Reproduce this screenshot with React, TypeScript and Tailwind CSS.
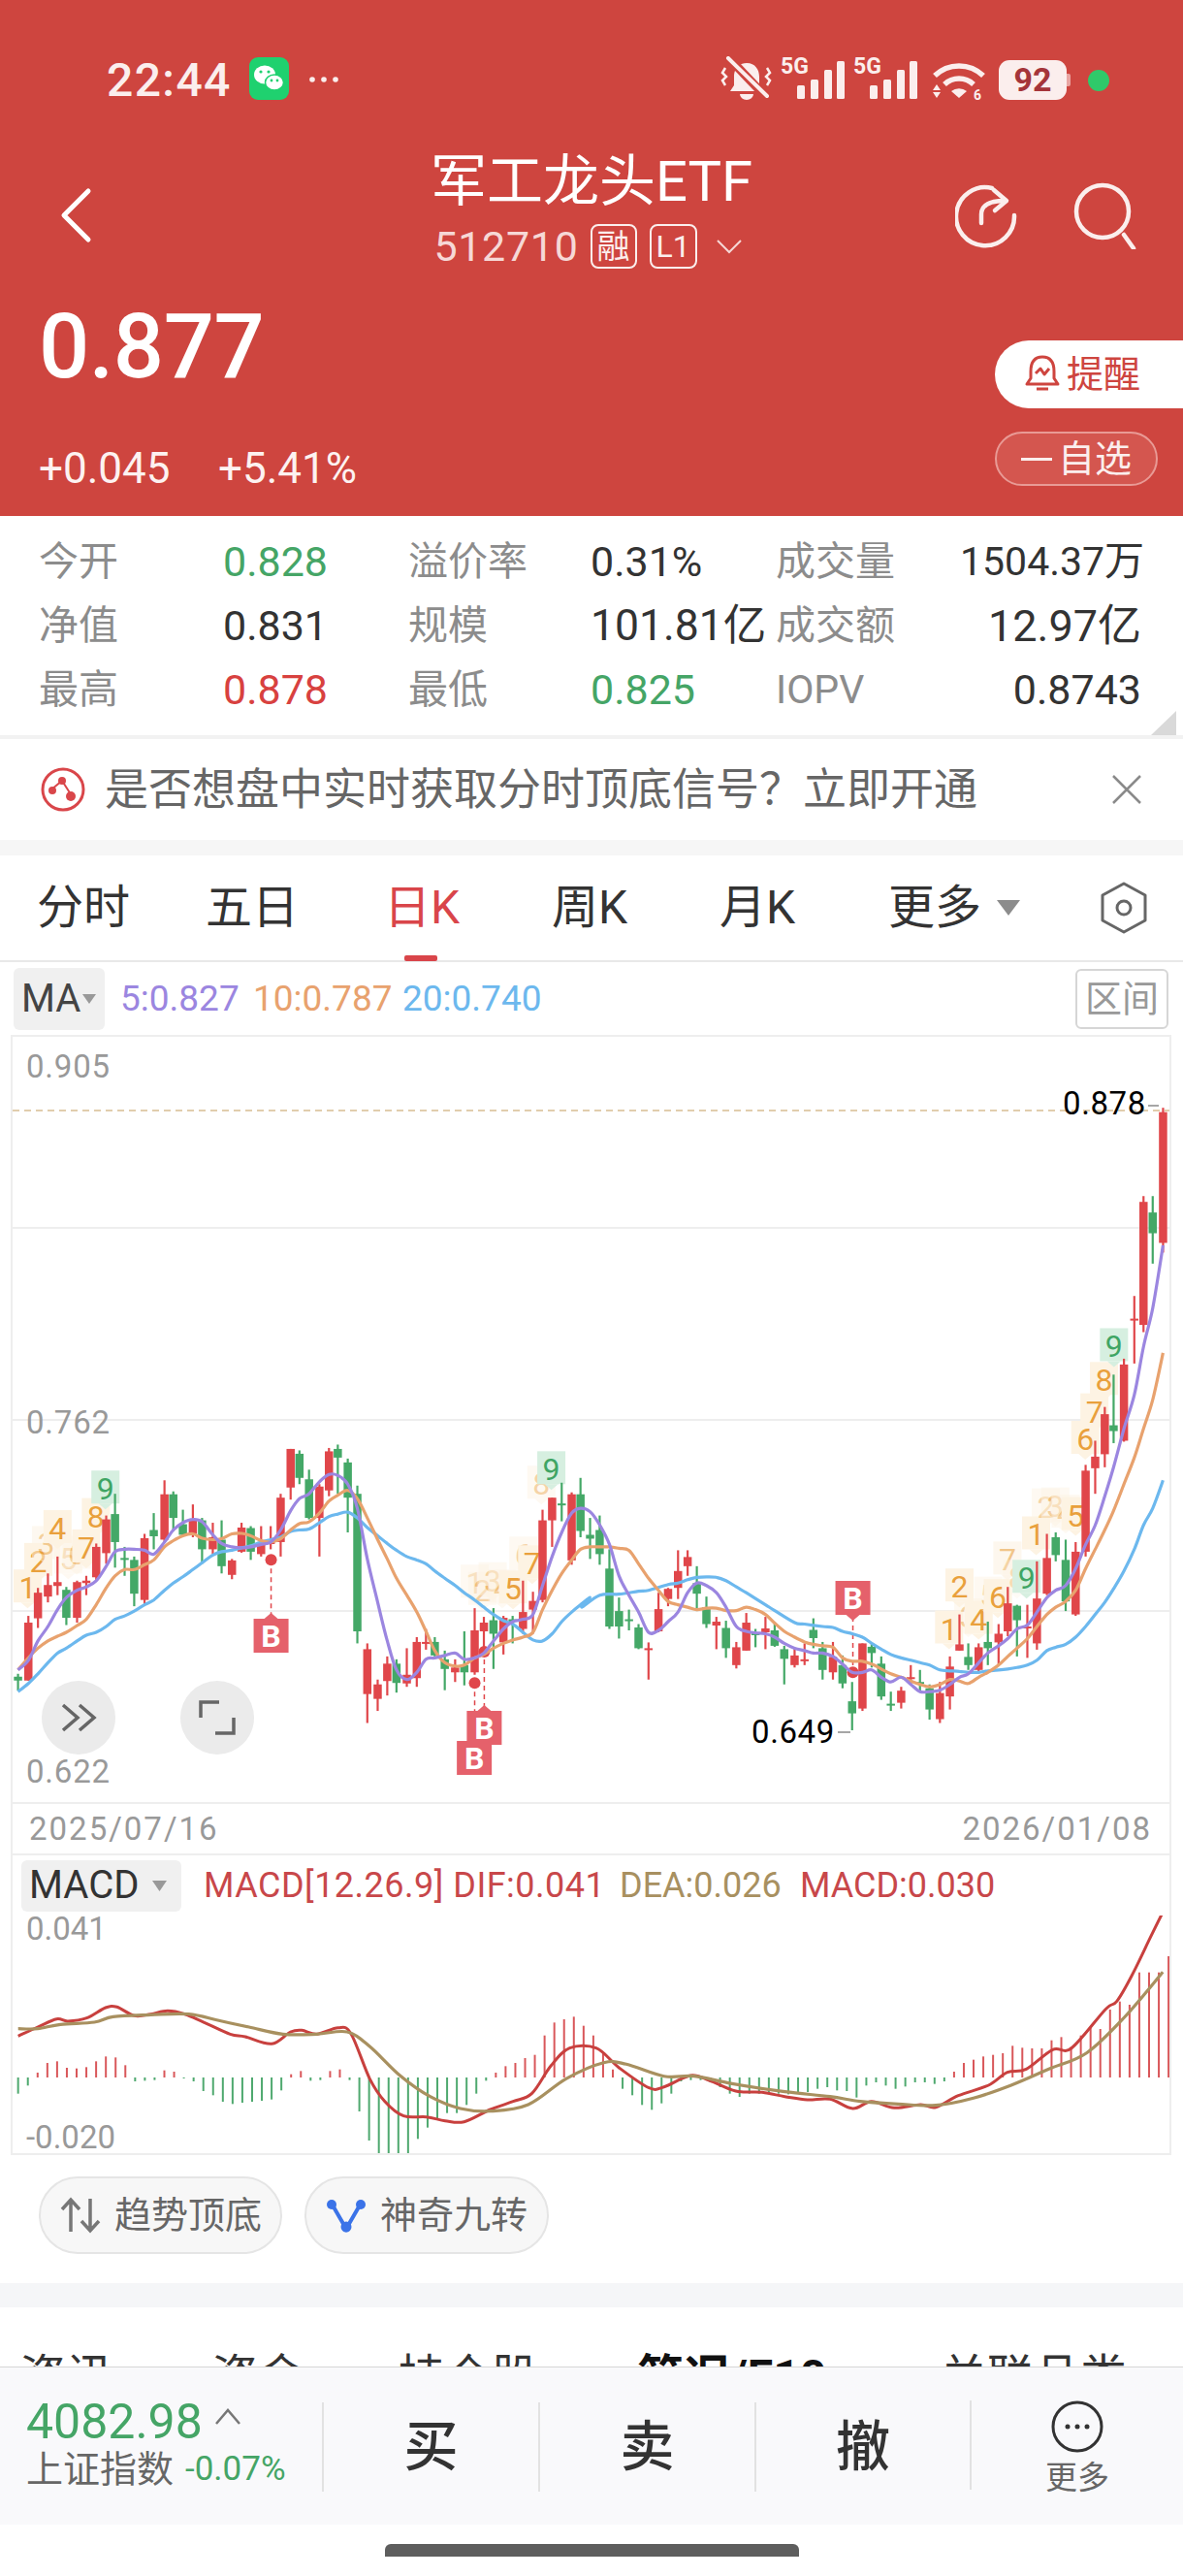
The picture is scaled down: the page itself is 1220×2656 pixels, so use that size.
import React from "react";

const R = "#e0464a";
const G = "#44a867";
const lx = (z: number) => z / 2.529;
const rx = (z: number) => 600 + z / 2.529;
const vy = (z: number) => 1080 + z / 2.01;

type C = [number, "r" | "g", number, number, number, number];
const leftCandles: C[] = [
  [47,"g",1298,1304,1312,1333],[74,"r",1178,1192,1312,1312],[99,"r",1120,1130,1183,1203],[125,"r",1090,1114,1138,1150],
  [150,"r",1055,1108,1116,1135],[173,"g",1118,1124,1182,1197],[201,"r",1105,1108,1182,1192],[225,"r",1095,1105,1110,1135],
  [251,"r",1028,1035,1098,1105],[277,"r",970,978,1048,1070],[300,"g",925,967,1025,1078],[325,"g",1035,1058,1062,1095],
  [350,"g",1055,1062,1132,1158],[377,"r",1008,1017,1145,1155],[401,"g",965,1000,1013,1040],[429,"r",897,926,1020,1025],
  [452,"g",920,926,975,1003],[477,"g",958,988,1010,1012],[503,"r",947,978,1008,1015],[527,"g",975,980,1040,1070],
  [555,"r",985,1015,1040,1050],[578,"g",980,1020,1075,1090],[605,"r",1060,1063,1093,1102],[630,"r",985,995,1045,1047],
  [654,"g",992,996,1045,1062],[681,"r",992,1025,1050,1055],[706,"r",992,1025,1028,1040],[732,"r",925,933,1025,1055],
  [758,"r",832,832,912,937],[781,"g",835,842,892,905],[806,"g",875,895,975,978],[833,"r",905,910,975,1055],
  [858,"r",830,837,918,930],[881,"g",823,832,850,925],[907,"g",852,860,933,1005],[932,"g",908,925,1210,1235],
  [958,"r",1235,1247,1340,1400],[985,"r",1310,1320,1350,1375],[1010,"r",1262,1277,1313,1343],[1034,"g",1268,1277,1317,1337],
  [1061,"r",1245,1300,1318,1325],[1087,"r",1222,1232,1307,1325],[1111,"r",1205,1232,1234,1248],[1134,"g",1222,1232,1260,1262],
  [1160,"g",1250,1268,1288,1332],[1187,"r",1268,1285,1295,1315],[1211,"g",1210,1280,1295,1322],[1238,"r",1162,1208,1295,1300],
  [1262,"r",1180,1192,1210,1245],[1287,"g",1162,1187,1215,1288],[1313,"r",1178,1182,1233,1258],[1337,"g",1178,1185,1190,1235],
  [1364,"r",1105,1170,1205,1215],[1390,"r",1128,1147,1165,1215],[1415,"r",958,980,1145,1150],[1440,"r",933,933,980,1035],
  [1465,"g",902,945,947,982],[1491,"r",922,926,1063,1072],[1514,"g",892,926,1002,1015],[1539,"g",975,1010,1018,1060],[1564,"g",970,1000,1050,1072],
];
const rightCandles: C[] = [
  [72,"g",1040,1080,1200,1205],[97,"g",1140,1168,1200,1225],[123,"g",1165,1185,1188,1208],[148,"g",1195,1202,1245,1247],
  [174,"r",1233,1245,1246,1310],[200,"r",1130,1164,1210,1212],[225,"r",1120,1122,1143,1158],[251,"r",1042,1085,1120,1143],
  [276,"r",1042,1056,1075,1095],[300,"g",1075,1110,1132,1168],[325,"g",1138,1160,1195,1203],[351,"r",1180,1190,1198,1247],
  [376,"g",1188,1203,1245,1265],[403,"r",1232,1243,1280,1287],[429,"r",1172,1192,1250,1250],[453,"g",1205,1214,1216,1243],
  [479,"r",1180,1204,1212,1247],[503,"g",1192,1208,1240,1242],[528,"g",1240,1247,1267,1320],[555,"r",1245,1260,1280,1285],
  [581,"r",1235,1268,1270,1280],[604,"g",1183,1207,1224,1245],[628,"g",1232,1245,1290,1310],[655,"r",1232,1263,1295,1310],
  [680,"g",1260,1280,1318,1328],[705,"g",1315,1355,1380,1415],[732,"r",1235,1235,1370,1375],[756,"g",1235,1242,1255,1285],
  [781,"g",1262,1277,1345,1352],[806,"g",1335,1360,1363,1375],[833,"r",1325,1333,1358,1370],[858,"r",1280,1305,1306,1320],
  [882,"g",1290,1315,1317,1335],[907,"g",1320,1328,1372,1393],[934,"r",1315,1338,1392,1400],[960,"r",1262,1283,1345,1372],
  [985,"r",1175,1237,1250,1250],[1008,"g",1235,1263,1280,1290],[1035,"r",1235,1243,1290,1295],[1059,"g",1190,1232,1245,1280],
  [1087,"r",1195,1215,1233,1280],[1111,"r",1118,1152,1210,1220],[1135,"g",1155,1157,1187,1262],[1162,"r",1155,1200,1202,1265],
  [1187,"r",1065,1142,1235,1248],[1213,"r",1008,1058,1132,1135],[1236,"g",1005,1015,1052,1065],[1262,"g",1020,1062,1148,1168],
  [1288,"r",1025,1045,1175,1178],[1314,"r",865,877,1045,1055],[1339,"r",815,848,872,925],[1364,"r",745,760,843,870],
  [1387,"g",678,783,795,820],[1414,"r",645,657,815,817],[1441,"r",515,562,565,655],[1465,"r",308,320,575,590],
  [1489,"g",308,342,385,448],[1516,"r",125,134,405,425],
];

/* Catmull-Rom smoothing so the averages read as curves, not polylines */
const smooth = (p: [number, number][]) => {
  let d = `M${p[0][0].toFixed(1)} ${p[0][1].toFixed(1)}`;
  for (let i = 0; i < p.length - 1; i++) {
    const a = p[Math.max(0, i - 1)];
    const b = p[i];
    const c = p[i + 1];
    const e = p[Math.min(p.length - 1, i + 2)];
    d += ` C${(b[0] + (c[0] - a[0]) / 6).toFixed(1)} ${(b[1] + (c[1] - a[1]) / 6).toFixed(1)} ${(c[0] - (e[0] - b[0]) / 6).toFixed(1)} ${(c[1] - (e[1] - b[1]) / 6).toFixed(1)} ${c[0].toFixed(1)} ${c[1].toFixed(1)}`;
  }
  return d;
};

const pts = (l: number[], r: number[]) => {
  const o: [number, number][] = [];
  for (let i = 0; i < l.length; i += 2) o.push([lx(l[i]), vy(l[i + 1])]);
  for (let i = 0; i < r.length; i += 2) o.push([rx(r[i]), vy(r[i + 1])]);
  return smooth(o);
};

const ma5 = pts(
  [47,1290,74,1270,99,1230,125,1200,150,1165,173,1140,201,1125,225,1118,251,1105,277,1075,300,1045,325,1040,350,1040,377,1042,401,1050,429,1025,452,1000,477,985,503,978,527,983,555,1010,578,1028,605,1035,630,1037,654,1035,681,1030,706,1025,732,1000,758,960,781,935,806,925,833,900,858,885,881,887,907,905,932,955,958,1060,985,1150,1010,1230,1034,1290,1061,1310,1087,1295,1111,1268,1134,1265,1160,1260,1187,1255,1211,1268,1238,1265,1262,1255,1287,1230,1313,1205,1337,1190,1364,1185,1390,1175,1415,1115,1440,1055,1465,1005,1491,965,1514,955,1539,962],
  [47,990,72,1030,97,1095,123,1135,148,1170,174,1212,200,1208,225,1190,251,1170,276,1130,300,1110,325,1115,351,1130,376,1160,403,1200,429,1210,453,1213,479,1215,503,1222,528,1235,555,1245,581,1250,604,1255,628,1255,655,1262,680,1278,705,1295,732,1295,756,1290,781,1305,806,1315,833,1305,858,1320,882,1335,907,1335,934,1332,960,1320,985,1305,1008,1298,1035,1275,1059,1255,1087,1240,1111,1225,1135,1205,1162,1197,1187,1170,1213,1140,1236,1125,1262,1115,1288,1080,1314,1030,1339,990,1364,930,1387,870,1414,790,1441,720,1465,620,1489,540,1516,410]
);
const ma10 = pts(
  [47,1290,74,1265,99,1245,125,1230,150,1220,173,1212,201,1198,225,1185,251,1155,277,1120,300,1095,325,1082,350,1082,377,1072,401,1062,429,1035,452,1022,477,1012,503,1008,527,1017,555,1020,578,1018,605,1008,630,1007,654,1012,681,1022,706,1025,732,1018,758,1000,781,987,806,983,833,965,858,940,881,928,907,918,932,935,958,975,985,1020,1010,1060,1034,1100,1061,1135,1087,1170,1111,1210,1134,1250,1160,1275,1187,1282,1211,1280,1238,1265,1262,1258,1287,1245,1313,1235,1337,1228,1364,1222,1390,1212,1415,1165,1440,1125,1465,1090,1491,1062,1514,1040,1539,1035],
  [47,1035,72,1035,97,1038,123,1042,148,1070,174,1100,200,1125,225,1148,251,1155,276,1160,300,1165,325,1162,351,1162,376,1167,403,1167,429,1160,453,1165,479,1175,503,1193,528,1210,555,1222,581,1232,604,1237,628,1240,655,1243,680,1265,705,1272,732,1272,756,1278,781,1288,806,1298,833,1305,858,1313,882,1320,907,1325,934,1320,960,1310,985,1313,1008,1318,1035,1305,1059,1295,1087,1280,1111,1262,1135,1245,1162,1225,1187,1200,1213,1175,1236,1160,1262,1148,1288,1125,1314,1080,1339,1040,1364,1000,1387,960,1414,905,1441,850,1465,790,1489,730,1516,633]
);
const ma20 = pts(
  [47,1335,74,1318,99,1298,125,1275,150,1255,173,1245,201,1230,225,1218,251,1212,277,1200,300,1185,325,1178,350,1168,377,1155,401,1145,429,1125,452,1110,477,1097,503,1082,527,1068,555,1052,578,1045,605,1042,630,1037,654,1033,681,1025,706,1020,732,1015,758,1003,781,1000,806,998,833,985,858,972,881,967,907,963,932,975,958,995,985,1012,1010,1028,1034,1042,1061,1055,1087,1062,1111,1070,1134,1085,1160,1100,1187,1115,1211,1130,1238,1145,1262,1160,1287,1175,1313,1188,1337,1195,1364,1212,1390,1228,1415,1230,1440,1215,1465,1190,1491,1170,1514,1155,1539,1140],
  [0,1160,47,1135,97,1133,148,1127,174,1125,225,1113,251,1110,276,1103,300,1098,325,1097,351,1098,376,1105,403,1118,429,1130,479,1155,503,1167,555,1192,581,1195,628,1200,655,1202,680,1210,705,1215,732,1222,756,1235,781,1247,806,1258,833,1265,858,1270,882,1275,907,1280,934,1290,960,1292,985,1293,1008,1295,1035,1295,1059,1292,1087,1290,1111,1288,1135,1285,1162,1280,1187,1270,1213,1250,1236,1243,1262,1237,1288,1222,1314,1200,1339,1175,1364,1150,1387,1122,1414,1085,1441,1040,1465,990,1489,955,1516,897]
);

type T = [number, number, string, number];
const tdL: T[] = [
  [72,1120,"1",1],[100,1065,"2",1],[120,1030,"3",0.5],[150,997,"4",1],[178,1060,"5",0.45],[200,1050,"6",0.45],[225,1037,"7",1],[250,972,"8",1],[275,915,"9",1],
  [1238,1110,"1",0.45],[1258,1125,"2",0.45],[1285,1105,"3",0.45],[1310,1120,"4",0.45],[1338,1122,"5",1],[1365,1052,"6",0.45],[1388,1070,"7",1],[1412,905,"8",0.45],[1438,875,"9",1],
];
const tdR: T[] = [
  [958,1205,"1",1],[985,1118,"2",1],[1008,1180,"3",0.45],[1035,1185,"4",1],[1060,1135,"5",0.45],[1085,1140,"6",1],[1110,1062,"7",0.6],[1135,1100,"8",0.3],[1160,1100,"9",1],
  [1185,1010,"1",1],[1210,952,"2",0.45],[1235,950,"3",0.45],[1262,965,"4",0.45],[1288,970,"5",1],[1313,812,"6",1],[1337,755,"7",1],[1362,690,"8",1],[1388,620,"9",1],
];

const bars = [-50,-25,15,45,50,30,28,32,50,65,62,38,-12,-10,-8,22,18,-3,-12,-42,-55,-75,-82,-78,-75,-72,-68,-40,10,20,-10,-8,20,25,-8,-105,-195,-240,-240,-240,-235,-190,-155,-130,-110,-110,-85,-50,-10,15,35,45,60,70,130,170,180,188,160,130,75,25,-35,-55,-85,-100,-80,-50,-12,-8,-8,-15,-30,-50,-60,-50,-50,-50,-50,-52,-50,-45,-35,-30,-40,-42,-62,-25,-15,-25,-35,-28,-15,-15,-20,-12,18,45,55,65,70,75,98,92,90,90,115,125,95,130,155,150,210,235,225,325,325,325,375];
const mp = (a: number[]) => {
  const o: [number, number][] = [];
  for (let i = 0; i < a.length; i += 2) o.push([a[i] / 1.285, 1890 + a[i + 1] / 3]);
  return smooth(o);
};
const dif = mp([24,628,50,600,75,575,90,582,115,572,140,540,155,538,178,565,200,560,222,550,245,560,270,585,305,622,325,630,360,652,385,615,400,610,420,622,448,602,465,620,490,760,510,830,535,875,565,878,590,890,615,893,650,855,680,830,705,805,730,720,755,665,790,665,820,725,860,788,880,785,915,750,940,765,975,798,1010,802,1040,815,1070,825,1100,823,1130,852,1155,830,1185,850,1220,840,1240,848,1270,812,1310,780,1335,740,1360,730,1395,670,1420,665,1465,545,1480,520,1500,440,1525,320,1541,245]);
const dea = mp([24,605,50,605,80,592,125,585,150,568,200,562,250,560,290,580,330,600,375,622,420,622,460,615,490,660,530,750,570,815,610,852,650,860,700,840,750,760,800,710,830,715,880,752,920,752,970,775,1040,800,1100,815,1140,830,1190,838,1240,842,1290,820,1340,780,1390,730,1440,680,1490,570,1541,430]);

function Candles({ data, f }: { data: C[]; f: (z: number) => number }) {
  return (
    <g>
      {data.map((c, i) => {
        const x = f(c[0]);
        const col = c[1] === "r" ? R : G;
        return (
          <g key={i}>
            <line x1={x} x2={x} y1={vy(c[2])} y2={vy(c[5])} stroke={col} strokeWidth={2.2} />
            <rect x={x - 4.25} width={8.5} y={vy(c[3])} height={Math.max(2, vy(c[4]) - vy(c[3]))} fill={col} />
          </g>
        );
      })}
    </g>
  );
}

function Td({ data, f }: { data: T[]; f: (z: number) => number }) {
  return (
    <g fontFamily="Roboto, sans-serif" fontSize={32} textAnchor="middle">
      {data.map((t, i) => {
        const x = f(t[0]);
        const y = vy(t[1]);
        const nine = t[2] === "9";
        const bg = nine ? "#d6efe0" : "#fdf3e3";
        return (
          <g key={i} opacity={t[3]}>
            <rect x={x - 14.5} y={y - 19} width={29} height={34} fill={bg} />
            <polygon points={`${x - 7},${y + 15} ${x + 7},${y + 15} ${x},${y + 21}`} fill={bg} />
            <text x={x} y={y + 11} fill={nine ? "#3fa564" : "#e9a03c"}>{t[2]}</text>
          </g>
        );
      })}
    </g>
  );
}

function BMark({ x, top, down }: { x: number; top: number; down?: boolean }) {
  return (
    <g>
      <rect x={x - 18} y={top} width={36} height={35} fill="#e5616b" />
      <polygon
        points={down ? `${x - 7},${top + 35} ${x + 7},${top + 35} ${x},${top + 41}` : `${x - 7},${top} ${x + 7},${top} ${x},${top - 6}`}
        fill="#e5616b"
      />
      <text x={x} y={top + 29} fontFamily="Roboto, sans-serif" fontWeight={700} fontSize={32} fill="#fff" textAnchor="middle">B</text>
    </g>
  );
}

function Dashed({ x, y1, y2 }: { x: number; y1: number; y2: number }) {
  return <line x1={x} x2={x} y1={y1} y2={y2} stroke={R} strokeWidth={1.5} strokeDasharray="5 4" />;
}

function Signal() {
  return (
    <svg width="66" height="46" viewBox="0 0 66 46" className="shrink-0">
      <text x="0" y="18" fontFamily="Roboto, sans-serif" fontWeight={700} fontSize="23" fill="#fbeeed">5G</text>
      <rect x="17" y="30" width="8" height="14" rx="1.5" fill="#fbeeed" />
      <rect x="31" y="24" width="8" height="20" rx="1.5" fill="#fbeeed" />
      <rect x="45" y="14" width="8" height="30" rx="1.5" fill="#fbeeed" />
      <rect x="58" y="5" width="8" height="39" rx="1.5" fill="#fbeeed" />
    </svg>
  );
}

export default function App() {
  return (
    <div className="w-[1220px] h-[2656px] bg-white overflow-hidden font-[Roboto,'Noto_Sans_CJK_SC',sans-serif]">
      {/* header */}
      <div className="h-[532px] bg-[#ce453f] text-white">
        <div className="h-[150px] pt-[60px] pl-[110px] flex items-start">
          <span className="text-[48px] leading-[45px] font-medium w-[147px] tracking-[1.4px] text-[#fbeeed]">22:44</span>
          <svg width="42" height="44" viewBox="0 0 42 44" className="-mt-[1px] shrink-0">
            <rect width="41" height="44" rx="9" fill="#1fd16f" />
            <ellipse cx="16" cy="18" rx="11" ry="9.5" fill="#fff" />
            <ellipse cx="26" cy="26" rx="9.5" ry="8" fill="#fff" stroke="#1fd16f" strokeWidth="1.5" />
            <circle cx="12" cy="15" r="1.6" fill="#1fd16f" />
            <circle cx="20" cy="15" r="1.6" fill="#1fd16f" />
            <circle cx="23" cy="24" r="1.4" fill="#1fd16f" />
            <circle cx="29" cy="24" r="1.4" fill="#1fd16f" />
          </svg>
          <svg width="36" height="44" viewBox="0 0 36 44" className="ml-[18px] shrink-0">
            <circle cx="5" cy="22" r="2.8" fill="#fbeeed" />
            <circle cx="17" cy="22" r="2.8" fill="#fbeeed" />
            <circle cx="29" cy="22" r="2.8" fill="#fbeeed" />
          </svg>
          <div className="ml-[390px] -mt-[2px] flex items-start">
            <svg width="54" height="46" viewBox="0 0 54 46" className="shrink-0">
              <path d="M27 7c-9 0-13 7-13 14v9l-4 6h34l-4-6v-9c0-7-4-14-13-14Z" fill="#fbeeed" />
              <path d="M20 39h14a7 6 0 0 1-14 0Z" fill="#fbeeed" />
              <line x1="6" y1="-1" x2="47" y2="42" stroke="#ce453f" strokeWidth="9" />
              <line x1="8" y1="2" x2="48" y2="41" stroke="#fbeeed" strokeWidth="4" strokeLinecap="round" />
              <path d="M5 12l-3 5 4 4-4 4 3 5M48 12l3 5-4 4 4 4-3 5" fill="none" stroke="#fbeeed" strokeWidth="2.5" />
            </svg>
            <span className="ml-[8px] flex"><Signal /></span>
            <span className="ml-[9px] flex"><Signal /></span>
            <svg width="56" height="46" viewBox="0 0 56 46" className="ml-[15px] shrink-0">
              <path d="M3 20a36 36 0 0 1 50 0" fill="none" stroke="#fbeeed" strokeWidth="5.5" />
              <path d="M13 29a22 22 0 0 1 30 0" fill="none" stroke="#fbeeed" strokeWidth="5.5" />
              <path d="M20 36a13 13 0 0 1 16 0l-8 7Z" fill="#fbeeed" />
              <path d="M1 35h8l-4-6ZM1 37h8l-4 6Z" fill="#fbeeed" />
              <text x="43" y="45" fontFamily="Roboto, sans-serif" fontWeight={700} fontSize="14" fill="#fbeeed">6</text>
            </svg>
            <span className="ml-[13px] w-[70px] h-[41px] mt-[4px] rounded-[11px] bg-[#fbeeed] text-[#a5353a] text-[34px] leading-[41px] font-bold text-center shrink-0">92</span>
            <span className="mt-[18px] w-[4px] h-[13px] rounded-r-[2px] bg-[#e9a5a2] shrink-0" />
            <span className="ml-[18px] mt-[14px] w-[22px] h-[22px] rounded-full bg-[#2fc96a] shrink-0" />
          </div>
        </div>

        <div className="h-[150px] flex">
          <div className="w-[440px] pl-[58px] pb-[6px] flex items-center">
            <svg width="40" height="60" viewBox="0 0 40 60" fill="none" stroke="#fff" strokeWidth="5" strokeLinecap="round" strokeLinejoin="round">
              <path d="M33 5 8 30l25 25" />
            </svg>
          </div>
          <div className="w-[340px] flex flex-col items-center">
            <div className="text-[58px] leading-[74px] whitespace-nowrap">军工龙头ETF</div>
            <div className="h-[60px] mr-[8px] flex items-center whitespace-nowrap text-[#f6d8d6]">
              <span className="text-[43px] tracking-[0.7px] leading-none">512710</span>
              <span className="ml-[12px] w-[48px] h-[46px] border-2 border-[#fbeeed] rounded-[8px] text-[34px] leading-[42px] text-center text-[#fbeeed]">融</span>
              <span className="ml-[13px] w-[49px] h-[46px] border-2 border-[#fbeeed] rounded-[8px] text-[32px] leading-[42px] text-center text-[#fbeeed]">L1</span>
              <svg width="26" height="16" viewBox="0 0 26 16" fill="none" stroke="#f6d8d6" strokeWidth="2" className="ml-[20px]">
                <path d="M1 2l12 12L25 2" />
              </svg>
            </div>
          </div>
          <div className="flex-1 flex items-center pb-[6px] pl-[205px] gap-[58px]">
            <svg width="64" height="68" viewBox="0 0 64 68" fill="none" stroke="#fbeeed" strokeWidth="4.5" strokeLinecap="round" strokeLinejoin="round" className="shrink-0">
              <path d="M38 6A30 30 0 1 0 61 34" />
              <path d="M27 42V33c0-9 8-14 24-14" />
              <path d="M40 8l13 11-12 10" />
            </svg>
            <svg width="66" height="70" viewBox="0 0 66 70" fill="none" stroke="#fbeeed" strokeWidth="4.5" strokeLinecap="round" className="shrink-0">
              <circle cx="30" cy="31" r="27" />
              <path d="M52 55l10 14" />
            </svg>
          </div>
        </div>

        <div className="flex justify-between">
          <div className="pl-[40px]">
            <div className="text-[92px] leading-[116px] font-medium tracking-[-0.5px]">0.877</div>
            <div className="mt-[35px] flex text-[44px] leading-[64px] text-[#fdf2f1]">
              <span className="w-[185px]">+0.045</span>
              <span>+5.41%</span>
            </div>
          </div>
          <div className="w-[194px] pt-[51px]">
            <div className="h-[70px] bg-white rounded-l-[36px] flex items-center pl-[30px] text-[#ce453f] text-[38px]">
              <svg width="38" height="42" viewBox="0 0 38 42" fill="none" stroke="#ce453f" strokeWidth="3" strokeLinejoin="round" className="shrink-0">
                <path d="M19 3C10 3 7 10 7 18v7l-4 6h32l-4-6v-7c0-8-3-15-12-15Z" />
                <path d="M13 36h12" />
                <path d="M12 20l5-5 4 6 5-6" />
              </svg>
              <span className="ml-[6px] whitespace-nowrap">提醒</span>
            </div>
            <div className="mt-[24px] h-[56px] w-[168px] rounded-[28px] border-2 border-[#e99a95] bg-[#d4564f] flex items-center justify-center text-[38px] text-[#fbeeed] whitespace-nowrap">
              <span className="w-[32px] h-[3px] bg-[#fbeeed] mr-[6px]" />
              自选
            </div>
          </div>
        </div>
      </div>

      {/* quote table */}
      <div className="relative h-[230px] border-b-4 border-[#f2f2f2] pt-[14px] pl-[40px] text-[#8c8c8c]">
        <div className="grid grid-cols-[190px_191px_188px_191px_190px_187px] auto-rows-[66px] items-center text-[41px] leading-none">
          <span>今开</span><span className="text-[43px] text-[#45a566]">0.828</span>
          <span>溢价率</span><span className="text-[43px] text-[#333]">0.31%</span>
          <span>成交量</span><span className="text-[41px] text-[#333] text-right whitespace-nowrap">1504.37万</span>
          <span>净值</span><span className="text-[43px] text-[#333]">0.831</span>
          <span>规模</span><span className="text-[44.5px] text-[#333] whitespace-nowrap">101.81亿</span>
          <span>成交额</span><span className="text-[45px] text-[#333] text-right whitespace-nowrap">12.97亿</span>
          <span>最高</span><span className="text-[43px] text-[#d8413f]">0.878</span>
          <span>最低</span><span className="text-[43px] text-[#45a566]">0.825</span>
          <span>IOPV</span><span className="text-[43px] text-[#333] text-right">0.8743</span>
        </div>
        <svg width="26" height="25" viewBox="0 0 26 25" className="absolute right-[7px] bottom-[0px]">
          <polygon points="26,0 26,25 0,25" fill="#d9d9d9" />
        </svg>
      </div>

      {/* banner */}
      <div className="h-[104px] flex items-center pl-[42px] text-[#666]">
        <svg width="46" height="46" viewBox="0 0 46 46" fill="none" className="shrink-0">
          <circle cx="23" cy="23" r="21" stroke="#d9464a" strokeWidth="3" />
          <path d="M11 23l11-9 9 14" stroke="#d9464a" strokeWidth="2" />
          <circle cx="12" cy="24" r="4" fill="#d9464a" />
          <circle cx="22" cy="14" r="4" fill="#d9464a" />
          <circle cx="31" cy="30" r="5" fill="#d9464a" />
        </svg>
        <span className="ml-[20px] text-[45px] leading-none whitespace-nowrap">是否想盘中实时获取分时顶底信号？立即开通</span>
        <svg width="32" height="32" viewBox="0 0 32 32" stroke="#8a8a8a" strokeWidth="2.5" className="ml-[auto] mr-[42px] shrink-0">
          <path d="M2 2l28 28M30 2 2 30" />
        </svg>
      </div>
      <div className="h-[16px] bg-[#f6f6f6]" />

      {/* tabs */}
      <div className="h-[110px] border-b-2 border-[#e8e8e8] flex items-center pl-[38px] text-[48px] leading-none text-[#333] whitespace-nowrap">
        <span className="w-[96px]">分时</span>
        <span className="ml-[78px] w-[96px]">五日</span>
        <span className="ml-[88px] w-[80px] text-[#d9454a] relative">
          日K
          <span className="absolute left-[21px] top-[73px] w-[34px] h-[6px] rounded-[2px] bg-[#d9454a]" />
        </span>
        <span className="ml-[93px] w-[82px]">周K</span>
        <span className="ml-[91px] w-[82px]">月K</span>
        <span className="ml-[92px] w-[96px]">更多</span>
        <svg width="24" height="16" viewBox="0 0 24 16" className="ml-[16px]"><polygon points="0,0 24,0 12,16" fill="#8c8c8c" /></svg>
        <svg width="48" height="54" viewBox="0 0 48 54" fill="none" stroke="#666" strokeWidth="3" className="ml-[83px]">
          <polygon points="24,2 46,14 46,40 24,52 2,40 2,14" strokeLinejoin="round" />
          <circle cx="24" cy="27" r="7" />
        </svg>
      </div>

      {/* MA row */}
      <div className="h-[75px] flex items-center pl-[14px] whitespace-nowrap text-[37px] leading-none">
        <div className="w-[94px] h-[64px] bg-[#f0f0f0] rounded-[6px] flex items-center pl-[8px] text-[40px] text-[#444]">
          MA
          <svg width="14" height="10" viewBox="0 0 14 10" className="ml-[2px]"><polygon points="0,0 14,0 7,10" fill="#999" /></svg>
        </div>
        <span className="ml-[16px] text-[#9b86e0] w-[137px]">5:0.827</span>
        <span className="text-[#e8a26e] w-[154px]">10:0.787</span>
        <span className="text-[#6cb8ee]">20:0.740</span>
        <span className="ml-auto mr-[15px] w-[96px] h-[62px] border-2 border-[#d6d6d6] rounded-[6px] flex items-center justify-center text-[#999] text-[38px]">区间</span>
      </div>

      {/* chart frame */}
      <div className="ml-[11px] w-[1197px] border-2 border-[#eeeeee]">
        <svg width="1193" height="789" viewBox="13 1069 1193 789" className="block">
          {[1266, 1464, 1661].map((y) => (
            <line key={y} x1="13" x2="1206" y1={y} y2={y} stroke="#eeeeee" strokeWidth="2" />
          ))}
          <line x1="13" x2="1206" y1="1145" y2="1145" stroke="#d8bd92" strokeWidth="1.5" strokeDasharray="7 5" />
          <g fontFamily="Roboto, sans-serif" fontSize="33" fill="#999" letterSpacing="0.8">
            <text x="27" y="1111">0.905</text>
            <text x="27" y="1478">0.762</text>
            <text x="27" y="1838">0.622</text>
          </g>
          <Td data={tdL} f={lx} />
          <Td data={tdR} f={rx} />
          <Candles data={leftCandles} f={lx} />
          <Candles data={rightCandles} f={rx} />
          <Dashed x={lx(707)} y1={vy(1062)} y2={vy(1180)} />
          <Dashed x={lx(1263)} y1={vy(1250)} y2={vy(1375)} />
          <Dashed x={lx(1238)} y1={vy(1317)} y2={vy(1440)} />
          <Dashed x={rx(707)} y1={vy(1180)} y2={vy(1295)} />
          <circle cx={lx(707)} cy={vy(1062)} r="6" fill={R} />
          <circle cx={lx(1263)} cy={vy(1252)} r="6" fill={R} />
          <circle cx={lx(1238)} cy={vy(1317)} r="6" fill={R} />
          <circle cx={rx(707)} cy={vy(1295)} r="6" fill={R} />
          <path d={ma20} fill="none" stroke="#6cb8ee" strokeWidth="3.2" />
          <path d={ma10} fill="none" stroke="#e8a26e" strokeWidth="3.2" />
          <path d={ma5} fill="none" stroke="#9b86e0" strokeWidth="3.2" />
          <BMark x={lx(707)} top={1669} />
          <BMark x={lx(1237)} top={1795} />
          <BMark x={lx(1263)} top={1764} />
          <BMark x={rx(707)} top={1630} down />
          <g fontFamily="Roboto, sans-serif" fontSize="33" fill="#000" letterSpacing="0.6">
            <text x="1096" y="1149">0.878</text>
            <text x="775" y="1797">0.649</text>
          </g>
          <line x1="1184" x2="1195" y1="1140" y2="1140" stroke="#888" strokeWidth="1.5" />
          <line x1="864" x2="877" y1="1786" y2="1786" stroke="#888" strokeWidth="1.5" />
          <circle cx="81" cy="1771" r="38" fill="#ebebeb" />
          <path d="M65 1758l15 13-15 13M82 1758l15 13-15 13" fill="none" stroke="#666" strokeWidth="3.5" />
          <circle cx="224" cy="1771" r="38" fill="#ebebeb" />
          <path d="M226 1755h-19v16M222 1787h19v-16" fill="none" stroke="#666" strokeWidth="3.5" />
        </svg>
        <div className="h-[53px] border-t-2 border-[#eeeeee] flex items-center justify-between pl-[17px] pr-[18px] text-[33px] leading-none text-[#999] tracking-[2px]">
          <span>2025/07/16</span>
          <span>2026/01/08</span>
        </div>
        <div className="border-t-2 border-[#eeeeee]">
          <div className="h-[62px] flex items-center pl-[9px] whitespace-nowrap text-[36px] leading-none">
            <div className="w-[165px] h-[53px] bg-[#f0f0f0] rounded-[6px] flex items-center pl-[8px] text-[40px] text-[#333]">
              MACD
              <svg width="15" height="11" viewBox="0 0 15 11" className="ml-[14px]"><polygon points="0,0 15,0 7.5,11" fill="#999" /></svg>
            </div>
            <span className="ml-[23px] text-[#c8474a] w-[429px] tracking-[0.5px]">MACD[12.26.9] DIF:0.041</span>
            <span className="text-[#a89060] w-[186px]">DEA:0.026</span>
            <span className="text-[#c8474a]">MACD:0.030</span>
          </div>
          <svg width="1193" height="245" viewBox="13 1975 1193 245" className="block">
            {bars.map((v, i) => {
              const x = (24 + 12.92 * i) / 1.285;
              return <line key={i} x1={x} x2={x} y1={2142} y2={2142 - v / 3} stroke={v > 0 ? "#d9575a" : "#4fa96f"} strokeWidth="2" />;
            })}
            <path d={dif} fill="none" stroke="#c8403e" strokeWidth="3" />
            <path d={dea} fill="none" stroke="#a8905f" strokeWidth="3.2" />
            <g fontFamily="Roboto, sans-serif" fontSize="33" fill="#999">
              <text x="27" y="2000">0.041</text>
              <text x="27" y="2215">-0.020</text>
            </g>
          </svg>
        </div>
      </div>

      {/* indicator chips */}
      <div className="h-[132px] pl-[40px] pt-[22px] flex gap-[23px] text-[38px] leading-none text-[#666] whitespace-nowrap">
        <div className="w-[251px] h-[80px] rounded-[40px] bg-[#f7f7f7] border-2 border-[#e5e5e5] flex items-center pl-[20px]">
          <svg width="42" height="38" viewBox="0 0 42 38" fill="none" stroke="#777" strokeWidth="3.5" className="shrink-0">
            <path d="M11 36V3M2 13l9-10 9 10M31 2v33M22 25l9 10 9-10" />
          </svg>
          <span className="ml-[14px]">趋势顶底</span>
        </div>
        <div className="w-[252px] h-[80px] rounded-[40px] bg-[#f7f7f7] border-2 border-[#e5e5e5] flex items-center pl-[20px]">
          <svg width="42" height="38" viewBox="0 0 42 38" fill="none" stroke="#3b73e8" strokeWidth="4" className="shrink-0">
            <path d="M6 7l15 26L36 7" />
            <circle cx="6" cy="8" r="5" fill="#3b73e8" stroke="none" />
            <circle cx="36" cy="8" r="5" fill="#3b73e8" stroke="none" />
            <circle cx="21" cy="31" r="5.5" fill="#3b73e8" stroke="none" />
          </svg>
          <span className="ml-[14px]">神奇九转</span>
        </div>
      </div>
      <div className="h-[25px] bg-[#f5f6f8]" />

      {/* clipped tab row */}
      <div className="h-[61px] overflow-hidden pt-[48px] pl-[20px] flex text-[48px] leading-[48px] text-[#333] whitespace-nowrap">
        <span className="w-[198px]">资讯</span>
        <span className="w-[193px]">资金</span>
        <span className="w-[246px]">持仓股</span>
        <span className="w-[313px] font-bold text-[#111]">简况/F10</span>
        <span>关联品类</span>
      </div>

      {/* bottom nav */}
      <div className="h-[163px] bg-[#f9f9fb] border-t border-[#d6d6d6] pt-[36px] flex items-start">
        <div className="w-[332px] pl-[27px] h-[92px] -mt-[4px]">
          <div className="flex items-start">
            <span className="text-[50px] leading-[48px] text-[#45a566]">4082.98</span>
            <svg width="28" height="18" viewBox="0 0 28 18" fill="none" stroke="#777" strokeWidth="2.5" className="ml-[12px] mt-[10px]">
              <path d="M2 16 14 2l12 14" />
            </svg>
          </div>
          <div className="flex items-center mt-[3px] whitespace-nowrap">
            <span className="text-[38px] leading-[44px] text-[#666]">上证指数</span>
            <span className="ml-[12px] text-[35px] leading-[44px] text-[#45a566]">-0.07%</span>
          </div>
        </div>
        <div className="w-[223px] h-[92px] border-l-2 border-[#e2e2e2] flex items-center justify-center text-[56px] font-medium leading-none text-[#333]">买</div>
        <div className="w-[223px] h-[92px] border-l-2 border-[#e2e2e2] flex items-center justify-center text-[56px] font-medium leading-none text-[#333]">卖</div>
        <div className="w-[222px] h-[92px] border-l-2 border-[#e2e2e2] flex items-center justify-center text-[56px] font-medium leading-none text-[#333]">撤</div>
        <div className="w-[220px] h-[92px] border-l-2 border-[#e2e2e2] flex flex-col items-center -mt-[2px]">
          <svg width="54" height="54" viewBox="0 0 54 54" fill="none" className="shrink-0">
            <circle cx="27" cy="27" r="25" stroke="#333" strokeWidth="3" />
            <circle cx="17" cy="27" r="2.5" fill="#333" />
            <circle cx="27" cy="27" r="2.5" fill="#333" />
            <circle cx="37" cy="27" r="2.5" fill="#333" />
          </svg>
          <span className="mt-[8px] text-[33px] leading-[36px] text-[#666]">更多</span>
        </div>
      </div>
      <div className="h-[53px] pt-[20px] flex justify-center">
        <div className="w-[427px] h-[13px] bg-[#5e5e5e] rounded-t-[6px]" />
      </div>
    </div>
  );
}
